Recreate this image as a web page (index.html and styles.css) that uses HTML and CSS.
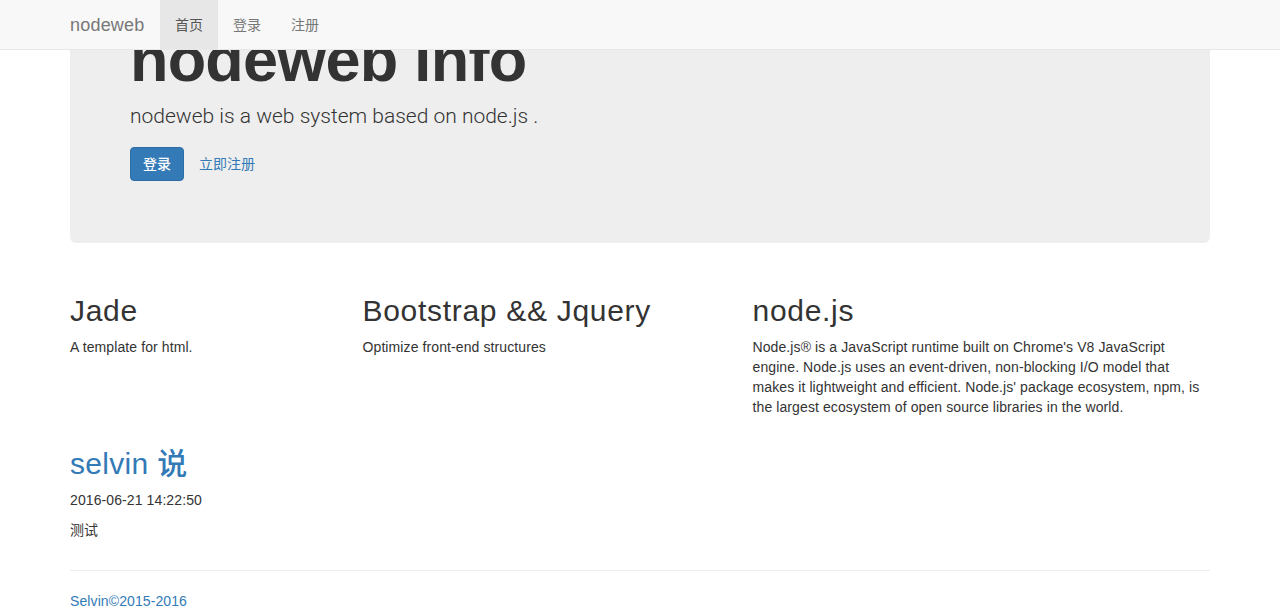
FILE: index.html
```html
<!DOCTYPE html>
<html lang="zh-CN">
<head>
<meta charset="utf-8">
<title>nodeweb</title>
<link rel="stylesheet" href="styles.css">
</head>
<body>
<nav class="navbar">
  <div class="container navbar-inner">
    <a class="brand" href="#">nodeweb</a>
    <ul class="nav">
      <li class="active"><a href="#">首页</a></li>
      <li><a href="#">登录</a></li>
      <li><a href="#">注册</a></li>
    </ul>
  </div>
</nav>

<main class="container">
  <section class="jumbotron">
    <h1>nodeweb info</h1>
    <p class="lead">nodeweb is a web system based on node.js .</p>
    <div class="actions">
      <a class="btn btn-primary" href="#">登录</a>
      <a class="btn btn-link" href="#">立即注册</a>
    </div>
  </section>

  <div class="features">
    <div class="feature">
      <h2>Jade</h2>
      <p>A template for html.</p>
    </div>
    <div class="feature">
      <h2>Bootstrap &amp;&amp; Jquery</h2>
      <p>Optimize front-end structures</p>
    </div>
    <div class="feature">
      <h2>node.js</h2>
      <p>Node.js® is a JavaScript runtime built on Chrome's V8 JavaScript engine. Node.js uses an event-driven, non-blocking I/O model that makes it lightweight and efficient. Node.js' package ecosystem, npm, is the largest ecosystem of open source libraries in the world.</p>
    </div>
  </div>

  <div class="post">
    <h2 class="post-title">selvin 说</h2>
    <p>2016-06-21 14:22:50</p>
    <p>测试</p>
  </div>

  <hr class="divider">
  <footer class="footer">
    <p><a href="#">Selvin©2015-2016</a></p>
  </footer>
</main>
<script src="app.js"></script>
</body>
</html>
```

FILE: styles.css
```css
* {
  box-sizing: border-box;
}

html, body {
  margin: 0;
}

body {
  padding-top: 50px;
  font-family: "Liberation Sans", Arial, "Noto Sans CJK SC", sans-serif;
  font-size: 14px;
  line-height: 20px;
  letter-spacing: 0.1px;
  color: #333;
  background: #fff;
}

a {
  color: #337ab7;
  text-decoration: none;
}

.container {
  width: 1170px;
  margin: 0 auto;
  padding: 0 15px;
}

/* navbar */
.navbar {
  position: fixed;
  top: 0;
  left: 0;
  right: 0;
  z-index: 10;
  height: 50px;
  background: #f8f8f8;
  border-bottom: 1px solid #e7e7e7;
  letter-spacing: 0;
}

.navbar-inner {
  display: flex;
  align-items: stretch;
  height: 49px;
}

.brand {
  display: block;
  width: 105px;
  margin-left: -15px;
  padding: 15px;
  font-size: 18px;
  line-height: 20px;
  color: #777;
  letter-spacing: 0.2px;
}

.nav {
  display: flex;
  margin: 0;
  padding: 0;
  list-style: none;
}

.nav a {
  display: block;
  padding: 15px;
  line-height: 20px;
  color: #777;
}

.nav .active a {
  background: #e7e7e7;
  color: #555;
}

/* jumbotron */
.jumbotron {
  padding: 48px 60px 62px;
  margin-bottom: 31px;
  background: #eee;
  border-radius: 6px;
}

.jumbotron h1 {
  margin: 20px 0 7px;
  font-size: 63px;
  line-height: 1.1;
  font-weight: 700;
  letter-spacing: -0.8px;
  color: #333;
}

.lead {
  margin: 0 0 16px;
  font-family: Roboto, "Liberation Sans", sans-serif;
  font-size: 21px;
  line-height: 30px;
  font-weight: 300;
  letter-spacing: 0;
}

.actions {
  display: flex;
  gap: 2px;
}

.btn {
  display: inline-block;
  padding: 6px 12px;
  font-size: 14px;
  line-height: 20px;
  letter-spacing: 0;
  border: 1px solid transparent;
  border-radius: 4px;
}

.btn-primary {
  color: #fff;
  font-weight: 500;
  background: #337ab7;
  border-color: #2e6da4;
}

.btn-link {
  color: #337ab7;
}

/* features */
.features {
  display: grid;
  grid-template-columns: 262.5px 360px 1fr;
  column-gap: 30px;
}

h2 {
  margin: 20px 0 10px;
  font-size: 30px;
  line-height: 33px;
  font-weight: 500;
  letter-spacing: 0.7px;
}

p {
  margin: 0 0 10px;
}

.post {
  display: flow-root;
}

.post-title {
  color: #337ab7;
  letter-spacing: 0.3px;
}

.divider {
  margin: 20px 0 20px;
  border: 0;
  border-top: 1px solid #eee;
}

.footer {
  padding-bottom: 2px;
}
```

FILE: app.js
```js
window.scrollTo(0, 93);
window.addEventListener("load", function () {
  window.scrollTo(0, 93);
});
```
